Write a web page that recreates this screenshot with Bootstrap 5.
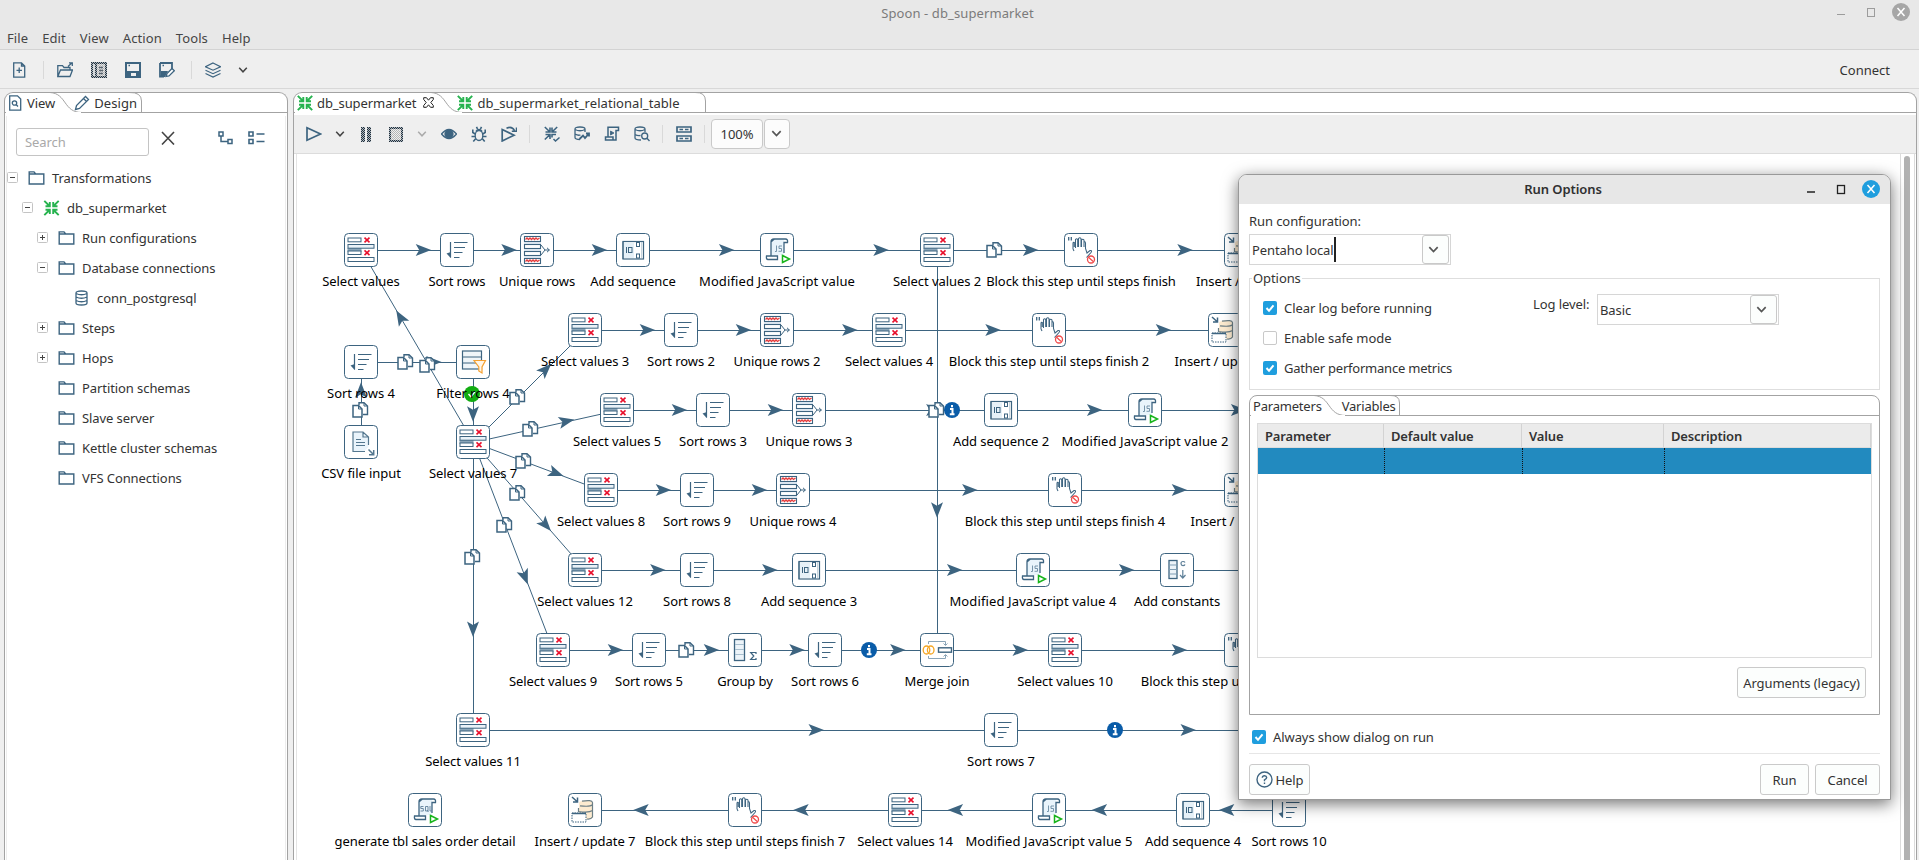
<!DOCTYPE html>
<html lang="en">
<head>
<meta charset="utf-8">
<title>Spoon - db_supermarket</title>
<link href="https://cdn.jsdelivr.net/npm/bootstrap@5.3.0/dist/css/bootstrap.min.css" rel="stylesheet">
<script src="https://cdn.jsdelivr.net/npm/bootstrap@5.3.0/dist/js/bootstrap.bundle.min.js"></script>
<style>
:root{--ink:#333;--blue:#3d6480;--line:#a3a3a3;--soft:#dcdcdc}
html,body{height:860px;overflow:hidden}
body{font-family:"Noto Sans",sans-serif;font-size:13px;line-height:18px;letter-spacing:-.08px;color:var(--ink);background:#efefef}
svg{display:block;flex:none}
.window-top{height:50px;background:#e8e8e8;border-bottom:1px solid #d3d3d3}
.caption-row{height:25px;color:#7b7b7b;letter-spacing:.1px;padding-right:4px}
.menu-row{height:26px;padding-left:7px;gap:14px;color:#454545;letter-spacing:.1px}
.maintools{height:39px;padding-top:2px;border-bottom:1px solid #d8d8d8}
.tool-ico{width:16px;height:16px;color:var(--blue);fill:none;stroke:currentColor;stroke-width:1.3}
.vsep{width:1px;height:18px;background:#d9d9d9;flex:none}
.work{height:771px;padding-top:3px}
.pane{border:1px solid var(--line);border-bottom:0;border-radius:9px 9px 0 0;background:#fff}
.pane-left{width:284px;margin-left:4px}
.pane-right{width:1624px;margin-left:5px}
.tabstrip{height:20px;border-bottom:1px solid var(--line);position:relative}
.tabstrip .curve{position:absolute;left:0;top:-1px}
.left-body{margin:3px 1px 0 1px;border:1px solid #ededed;border-top:0;border-bottom:0;height:745px}
.search-box{width:133px;height:28px;border:1px solid #c4c4c4;border-radius:3px;padding:0 8px;color:#a9a9a9;font-size:13px}
.tree-row{height:30px}
.tools2{height:39px;margin-top:2px;background:#efefef;border-bottom:1px solid #dcdcdc}
.boxed{border:1px solid #c9c9c9;border-radius:4px;background:#fcfcfc;height:30px}
.run-dialog{position:absolute;left:1238px;top:174px;width:653px;height:626px;background:#fff;border:1px solid #999;border-radius:9px 9px 0 0;box-shadow:0 4px 16px rgba(0,0,0,.55)}
.dlg-caption{height:29px;padding-bottom:2px;background:#e7e7e7;border-radius:8px 8px 0 0;font-weight:600;font-size:13px;color:#303030}
.combo{border:1px solid #d6d6d6;height:31px;padding:0 2px;background:#fff}
.combo-btn{width:27px;height:29px;border:1px solid #c9c9c9;border-radius:3px;background:#fcfefd;margin-right:-1px}
.caret{width:2px;height:25px;background:#222}
.opt-frame{border:1px solid #dedede;height:112px;position:relative;margin-top:13px}
.opt-frame .frame-title{position:absolute;top:-10px;left:2px;background:#fff;padding:0 1px}
.tick{width:14px;height:14px;border-radius:2px;background:#1f9ede;flex:none}
.tick.off{background:#fff;border:1px solid #c9c9c9}
.param-pane{height:320px;border:1px solid var(--line);border-radius:8px 8px 0 0;margin-top:5px}
.param-grid{margin:7px 7px 0 7px;height:235px;border:1px solid var(--soft)}
.param-head{height:24px;background:#ebebeb;border-bottom:1px solid var(--soft);font-weight:600;color:#333;letter-spacing:-.15px}
.param-head>div{border-right:1px solid #d3d3d3;padding:3px 0 0 7px}
.param-sel{height:26px;background:#228abf}
.param-sel>div+div{border-left:1px dotted #111}
.param-head>div:nth-child(1),.param-sel>div:nth-child(1){width:126px}
.param-head>div:nth-child(2),.param-sel>div:nth-child(2){width:138px}
.param-head>div:nth-child(3),.param-sel>div:nth-child(3){width:142px}
.push{border:1px solid #cacaca;border-radius:3px;background:#fcfefd;height:31px}
.graph text{font-family:"Noto Sans",sans-serif;font-size:13px;fill:#000;text-anchor:middle;letter-spacing:-.06px}
.graph .spaced{letter-spacing:.12px}
</style>
</head>
<body>
<!-- shared symbols -->
<svg width="0" height="0" class="position-absolute">
<defs>
<pattern id="dither" width="2" height="2" patternUnits="userSpaceOnUse"><rect width="1" height="1" fill="#25303a"/><rect x="1" y="1" width="1" height="1" fill="#25303a"/><rect x="1" width="1" height="1" fill="#a9b6c0"/><rect y="1" width="1" height="1" fill="#a9b6c0"/></pattern>
<pattern id="dither2" width="2" height="2" patternUnits="userSpaceOnUse"><rect width="1" height="1" fill="#b5b5b5"/><rect x="1" y="1" width="1" height="1" fill="#b5b5b5"/></pattern>
<symbol id="chev" viewBox="0 0 10 10"><path d="M1.200 2.800 5 6.800 8.800 2.800" fill="none" stroke="currentColor" stroke-width="1.500"/></symbol>
<symbol id="folder" viewBox="0 0 16 14"><path d="M.7 13V.9H5.500L7.200 3H15.300V13Z M.7 3H7" fill="none" stroke="#3d6480" stroke-width="1.400"/></symbol>
<symbol id="ktr" viewBox="0 0 16 16"><g fill="none" stroke="#27b34f" stroke-width="1.9"><path d="M.8.8 6 6M2 6.300H6.300V2"/><path d="M15.200.8 10 6M14 6.300H9.700V2"/><path d="M.8 15.200 6 10M2 9.700H6.300V14"/><path d="M15.200 15.200 10 10M14 9.700H9.700V14"/></g></symbol>
<symbol id="ok" viewBox="0 0 14 14"><path d="M3.500 7 6 9.800 10.500 4.300" fill="none" stroke="#fff" stroke-width="2"/></symbol>
<symbol id="winx" viewBox="0 0 18 18"><circle cx="9" cy="9" r="9" fill="currentColor"/><path d="M5.500 5 12.500 13M12.500 5 5.500 13" stroke="#fff" stroke-width="1.500"/></symbol>

<symbol id="st-frame" viewBox="0 0 34 34"><rect x=".5" y=".5" width="33" height="33" rx="4" fill="#fff" stroke="#3d6480"/></symbol>
<symbol id="st-select" viewBox="0 0 34 34"><g fill="#fff" stroke="#3d6480"><rect x="3.500" y="15" width="14" height="4" fill="#8aa5b8" stroke="none"/><rect x="4" y="5" width="13" height="3.800"/><rect x="4" y="11.500" width="26" height="3.700" fill="#eaf2f8"/><rect x="4" y="18" width="13" height="3.500"/><rect x="4" y="24.500" width="26" height="4"/></g><path d="M20.500 4.700 25.500 9.400M25.500 4.700 20.500 9.400M20.500 17.400 25.500 22.100M25.500 17.400 20.500 22.100" stroke="#e8112d" stroke-width="1.600"/></symbol>
<symbol id="st-sort" viewBox="0 0 34 34"><path d="M10.500 9V24.500M14 9.500H27.500M14 14.500H25M14 19.500H22.500M14 24.500H19.500" stroke="#3d6480" stroke-width="1.200"/><path d="M6.500 20.500 10.800 19V25Z" fill="#3d6480"/></symbol>
<symbol id="st-unique" viewBox="0 0 34 34"><rect x="4" y="3" width="17" height="28" fill="#e3edf5"/><g fill="#fff" stroke="#3d6480" stroke-width="1.100"><rect x="4.500" y="3.500" width="16" height="5"/><rect x="4.500" y="11.500" width="16" height="4"/><rect x="4.500" y="18.500" width="16" height="4"/><rect x="4.500" y="25.500" width="16" height="5"/></g><path d="M5.500 6.500 7 5 8.500 6.500 10 5 11.500 6.500 13 5 14.500 6.500 16 5 17.500 6.500 19.500 5M5.500 28.500 7 27 8.500 28.500 10 27 11.500 28.500 13 27 14.500 28.500 16 27 17.500 28.500 19.500 27" fill="none" stroke="#e63c3c" stroke-width="1.300"/><path d="M21 12 25 17H29.500M21 22 25 17M27 14.800 29.300 17 27 19.200" fill="none" stroke="#3d6480"/></symbol>
<symbol id="st-seq" viewBox="0 0 34 34"><rect x="7" y="8.500" width="20.500" height="17.500" fill="#fff" stroke="#3d6480" stroke-width="1.200"/><rect x="8" y="9.500" width="10" height="15.500" fill="#e6f1f8"/><path d="M10.500 14V20M7 8.500V26" stroke="#3d6480"/><rect x="12.500" y="14.500" width="3.500" height="5" fill="none" stroke="#3d6480"/><rect x="20.500" y="9.500" width="3" height="4" fill="#fff" stroke="#3d6480"/><rect x="20.500" y="21" width="3" height="4" fill="#fff" stroke="#3d6480"/><path d="M25.700 9V25" stroke="#b9cad6"/></symbol>
<symbol id="scroll" viewBox="0 0 34 34"><path d="M11 23V8Q11 6 13 6H24V22H11Z" fill="#e9f4fb"/><path d="M11 22.500V9Q11 6 14 6H25.500Q28 6 27.500 9.500H24V20M14.500 6Q12.500 7.500 11 9M6.500 23H17.500V26.500H8Q6 26.500 6.500 23Z" fill="none" stroke="#3d6480" stroke-width="1.300"/><path d="M22.500 22.500 29.500 26 22.500 29.500Z" fill="#fff" stroke="#17b41a" stroke-width="1.500"/></symbol>
<symbol id="st-js" viewBox="0 0 34 34"><use href="#scroll"/><path d="M16.500 12.500V18.500H15M22 13H19V15.500H21.500V18.300H18.500" fill="none" stroke="#6b8ba2" stroke-width=".9"/></symbol>
<symbol id="st-sql" viewBox="0 0 34 34"><use href="#scroll"/><path d="M15.500 13.500H12.800V15.500H15.300V18H12.500M17.500 13.500H20V18H17.500ZM19 17 20.500 19M22 13V18H24" fill="none" stroke="#5d7f98" stroke-width=".9"/></symbol>
<symbol id="st-block" viewBox="0 0 34 34"><path d="M4.700 4V7.500M7.300 4V7.500" stroke="#3d6480" stroke-width="1.300"/><path d="M9 16V10.500Q9 9 10.300 9.400V14M11.500 15V6.500Q12.700 5 13.700 6.500V14M14.500 14V5.500Q15.800 4 17 5.500V14M17.500 14V7Q18.800 5.500 20 7V14M20 8.500Q21.500 8.500 21.500 10V15.500L23 20 26 17.500Q28.500 17 27 19.500L22.500 24.500M9 16 10 18" fill="none" stroke="#3d6480" stroke-width="1.050"/><circle cx="27" cy="26.500" r="3.500" fill="#fff" stroke="#f04a4a" stroke-width="1.300"/><path d="M24.500 24.200 29.500 28.800" stroke="#f04a4a" stroke-width="1.200"/></symbol>
<symbol id="st-insert" viewBox="0 0 34 34"><path d="M11 10Q11 7.500 18 7.500T25 10V24Q24 26.500 17 26.500L11 20Z" fill="#fdebd0"/><path d="M14 8.200Q24 6.500 24.500 9.500V24Q23 26.500 19 26M10.500 15V19M12 12.800Q22 14 24.500 11.800M10.500 18.500Q21 20 24.500 17.500" fill="none" stroke="#6c7f86" stroke-width="1.200"/><path d="M4 4 9 8.500M9.500 4.500V9H5" fill="none" stroke="#3d6480" stroke-width="1.500"/><rect x="4" y="20" width="14" height="9" fill="#fff" stroke="#3d6480" stroke-dasharray="1.500 1"/><path d="M4 20.500H18" stroke="#3d6480" stroke-width="1.500"/></symbol>
<symbol id="st-group" viewBox="0 0 34 34"><rect x="6.500" y="6.500" width="10" height="21" fill="#edf4f9" stroke="#3d6480" stroke-width="1.300"/><path d="M7 11.500H16M7 16.500H16M7 21.500H16" stroke="#a9bfce"/><path d="M28 21V19.500H22.700L25.800 23 22.700 26.500H28V25" fill="none" stroke="#3d6480" stroke-width="1.200"/></symbol>
<symbol id="st-merge" viewBox="0 0 34 34"><g fill="none" stroke="#f5a623" stroke-width="1.300"><ellipse cx="6.500" cy="17" rx="3.300" ry="4"/><ellipse cx="10.700" cy="17" rx="3.300" ry="4"/></g><path d="M8.500 11V8.500H25.500V12M23.500 10.500 25.500 12.500 27.500 10.500M8.500 23V25.500H25.500V22M23.500 23.500 25.500 21.500 27.500 23.500" fill="none" stroke="#8aa5b8"/><rect x="18.500" y="14.800" width="13" height="4.400" fill="#fff" stroke="#3d6480" stroke-width="1.400"/></symbol>
<symbol id="st-const" viewBox="0 0 34 34"><rect x="9" y="7.500" width="8" height="18" fill="#edf4f9" stroke="#3d6480" stroke-width="1.300"/><path d="M9 12H17M9 16.500H17M9 21H17" stroke="#7f9db3"/><path d="M25 9.500Q24.500 8.500 23 8.500 21 8.500 21 10.500T23 12.700Q24.500 12.700 25 11.500M22.800 17V24.500M20 22 22.800 25 25.500 22" fill="none" stroke="#5d7f98" stroke-width="1.200"/></symbol>
<symbol id="st-filter" viewBox="0 0 34 34"><rect x="6.500" y="6" width="19" height="18" fill="#eff5f9" stroke="#3d6480" stroke-width="1.200"/><path d="M7 12H25M7 18H25" stroke="#3d6480"/><path d="M18 15.500H29.500L26 22V28L22.800 26V22Z" fill="#fff5e6" stroke="#f5a030" stroke-width="1.200"/></symbol>
<symbol id="st-csv" viewBox="0 0 34 34"><path d="M9 7H19L24.500 12V22L20 26.500H9Z" fill="#eaf4fb"/><path d="M24.500 20V12L19 7H9V26.500H21M19 7V12H24M12 14.500H17M12 17.500H21M12 20.500H21" fill="none" stroke="#54778f" stroke-width="1.200"/><path d="M24.500 24.500 29.500 29.500M29.700 25V29.700H25" fill="none" stroke="#54778f" stroke-width="1.500"/></symbol>
<symbol id="copies" viewBox="0 0 17 16"><path d="M7 3V.7H12L15.500 4V12.500H11" fill="#fff" stroke="#3d6480" stroke-width="1.400"/><path d="M1 3.500H6.500L10 7V15H1Z" fill="#fff" stroke="#3d6480" stroke-width="1.500"/><path d="M6.500 3.500V7H10M12 1V4H15" fill="none" stroke="#3d6480"/></symbol>
<symbol id="info" viewBox="0 0 16 16"><circle cx="8" cy="8" r="8" fill="#0a5ca8"/><path d="M8 3V5.200M6 7H8.500V12M5.800 12.200H10.500" fill="none" stroke="#fff" stroke-width="2"/></symbol>
<symbol id="check" viewBox="0 0 16 16"><circle cx="8" cy="8" r="8" fill="#12ad12"/><path d="M4.500 8 7 10.800 11 5.500" fill="none" stroke="#fff" stroke-width="1.400"/></symbol>
</defs></svg>

<header class="window-top">
  <div class="caption-row d-flex position-relative justify-content-center align-items-center">Spoon - db_supermarket
    <div class="position-absolute end-0 top-0 d-flex align-items-center" style="padding:3px 9px 0 0;color:#a6a6a6">
      <svg width="64" height="18"><path d="M0 11.500H8" stroke="#9c9c9c"/><rect x="30.500" y="5.500" width="7" height="8" fill="none" stroke="#9c9c9c"/></svg>
      <svg width="18" height="18" style="margin-left:-9px"><use href="#winx"/></svg>
    </div>
  </div>
  <nav class="menu-row d-flex align-items-center"><span>File</span><span>Edit</span><span>View</span><span>Action</span><span>Tools</span><span>Help</span></nav>
</header>

<div class="maintools d-flex align-items-center" style="padding-left:11px">
  <svg class="tool-ico" viewBox="0 0 16 16"><path d="M2.700.8H10.500L13.700 4V15.200H2.700ZM10.500.8V4H13.700M8.200 5.500V11M5.500 8.300H11"/></svg>
  <span class="vsep" style="margin:0 13px 0 16px"></span>
  <svg class="tool-ico" viewBox="0 0 16 16"><path d="M.8 14.500V3.700H5.500L7 5.500H13V8M.8 14.500 3.500 8H15.500L13 14.500ZM11 4.500 15 .8M12 .8H15.300V4"/></svg>
  <svg class="tool-ico" style="margin:0 18px" viewBox="0 0 16 16"><g stroke="none"><rect width="16" height="16" fill="url(#dither)"/><rect x="6" y="2" width="8" height="12" fill="#e4e6e8"/><rect x="6" y="2" width="8" height="12" fill="url(#dither2)"/><rect x="2" y="2" width="2" height="12" fill="#d5d9dc"/></g><path d="M8 5.500H12M8 8.500H12M8 11.500H12" stroke="#59656f"/></svg>
  <svg class="tool-ico" viewBox="0 0 16 16"><path d="M1 1H15V15H1Z" stroke-width="2"/><path d="M2 9H14V15H11V11H6V15H2Z" fill="#3d6480" stroke="none"/><path d="M3.500 3.500H5" /></svg>
  <svg class="tool-ico" style="margin-left:18px" viewBox="0 0 16 16"><path d="M1 1H13V7M1 1V14.500H5" stroke-width="1.800"/><path d="M3.500 3.500H5"/><path d="M2 9H9L6 15H2Z" fill="#3d6480" stroke="none"/><path d="M7 14.500 8 11.500 13 6.500 15.300 8.800 10 14Z" fill="#fff"/></svg>
  <span class="vsep" style="margin:0 13px 0 16px"></span>
  <svg class="tool-ico" viewBox="0 0 16 16"><path d="M8 1 15.500 4.700 8 8.200.5 4.700ZM.5 8.200 8 11.700 15.500 8.200M.5 11.500 8 15 15.500 11.500" stroke-width="1.200"/></svg>
  <svg width="10" height="10" style="margin-left:17px;color:#444"><use href="#chev"/></svg>
  <span class="ms-auto" style="margin-right:29px;letter-spacing:0">Connect</span>
</div>

<main class="work d-flex">
  <section class="pane pane-left">
    <div class="tabstrip d-flex align-items-center">
      <svg class="curve" width="280" height="21" fill="none" stroke="#a3a3a3"><path d="M45 .5C62 1.500 58 20.500 77 20.500M124 .5Q136.500 0 136.500 9V20"/><path d="M1 20.500H76" stroke="#fff"/></svg>
      <svg class="tool-ico" style="margin-left:2px" viewBox="0 0 16 16"><path d="M2.700.8H10.500L13.700 4V15.200H2.700Z"/><circle cx="7.500" cy="8" r="2.200"/><path d="M9.300 9.800 11 11.500"/></svg>
      <span style="margin-left:4px">View</span>
      <svg class="tool-ico" style="margin-left:19px" viewBox="0 0 16 16"><path d="M1.500 14.500 2.500 10.500 11.500 1.500 14.500 4.500 5.500 13.500ZM9.500 3.500 12.500 6.500"/></svg>
      <span style="margin-left:4px;letter-spacing:.1px">Design</span>
    </div>
    <div class="left-body">
      <div class="d-flex align-items-start" style="padding:12px 0 0 9px">
        <div class="search-box d-flex align-items-center">Search</div>
        <svg width="14" height="14" style="margin:3px 0 0 12px"><path d="M1 1 13 13.500M13 1 1 13.500" stroke="#444" stroke-width="1.600"/></svg>
        <svg width="15" height="14" style="margin:3px 0 0 43px" fill="none" stroke="#3d6480" stroke-width="1.500"><path d="M1 1H5V5H1ZM10 8.500H14V12.500H10ZM3 5V10.500H10"/></svg>
        <svg width="17" height="14" style="margin:3px 0 0 15px" fill="none" stroke="#3d6480" stroke-width="1.600"><path d="M1 1H5V5H1ZM1 8.500H5V12.500H1ZM8.500 3H16.500M8.500 10.500H16.500"/></svg>
      </div>
      <div id="tree" style="padding-top:7px"></div>
    </div>
  </section>

  <section class="pane pane-right">
    <div class="tabstrip d-flex align-items-center">
      <svg class="curve" width="500" height="21" fill="none" stroke="#a3a3a3"><path d="M137 .5C154 1.500 150 20.500 169 20.500M401 .5Q411.500 0 411.500 9V20"/><path d="M1 20.500H168" stroke="#fff"/></svg>
      <svg width="16" height="16" style="margin-left:3px"><use href="#ktr"/></svg>
      <span style="margin-left:4px">db_supermarket</span>
      <svg width="11" height="11" style="margin-left:7px" viewBox="0 0 11 11"><path d="M.7.7H3.500L5.500 3.200 7.500.7H10.300V2.500L7.800 5.500 10.300 8.500V10.300H7.500L5.500 7.800 3.500 10.300H.7V8.500L3.200 5.500.7 2.500Z" fill="#fff" stroke="#222"/></svg>
      <svg width="16" height="16" style="margin-left:23px"><use href="#ktr"/></svg>
      <span style="margin-left:4px;letter-spacing:.06px">db_supermarket_relational_table</span>
    </div>
    <div class="tools2 d-flex align-items-center" id="tools2">
      <svg class="tool-ico" style="margin-left:12px" viewBox="0 0 16 16"><path d="M1 1.800 14.500 8 1 14.200Z" stroke-width="1.700"/></svg>
      <svg width="10" height="10" style="margin-left:13px;color:#444"><use href="#chev"/></svg>
      <svg width="12" height="15" style="margin-left:16px"><rect width="4" height="15" fill="url(#dither)"/><rect x="6" width="4" height="15" fill="url(#dither)"/></svg>
      <svg width="15" height="15" style="margin-left:16px"><rect width="14" height="15" fill="url(#dither)"/><rect x="2" y="2" width="10" height="11" fill="#efefef"/><rect x="2" y="2" width="10" height="11" fill="url(#dither2)"/></svg>
      <svg width="10" height="10" style="margin-left:13px;color:#aaa"><use href="#chev"/></svg>
      <svg class="tool-ico" style="margin-left:14px" viewBox="0 0 16 16"><path d="M.5 8Q8-1 15.500 8 8 17 .5 8Z"/><circle cx="8" cy="8" r="4" fill="#3d6480"/></svg>
      <svg class="tool-ico" style="margin-left:14px" viewBox="0 0 16 16"><ellipse cx="8" cy="9.500" rx="3.800" ry="5"/><path d="M5 5.500Q8 1.500 11 5.500M5.500.8 6.500 3M10.500.8 9.500 3M4.300 8 1.800 6.500V3.500M11.700 8 14.200 6.500V3.500M4 10.500H.5M12 10.500H15.500M4.800 12.500 2.300 15.500M11.200 12.500 13.700 15.500" stroke-width="1.600"/></svg>
      <svg class="tool-ico" style="margin-left:14px" viewBox="0 0 16 16"><path d="M1.200 3.500 13 9.200 1.200 15Z" stroke-width="1.700"/><path d="M5.500 2.200Q11-.2 13.500 4.500M15.500 1.500V5.200H10.800" stroke-width="1.500"/></svg>
      <span class="vsep" style="margin:0 14px 0 12px"></span>
      <svg class="tool-ico" viewBox="0 0 16 16"><path d="M.8 1 5.500 5.500M1.500 6H6V1.500M13.200 1 8.500 5.500M12.500 6H8V1.500M.8 13.500 5.500 9M1.500 8.500H6V13M8 11.500V8.500H12" stroke-width="1.600"/><path d="M9.500 13 11.500 15 15.500 11.500" stroke-width="1.500"/></svg>
      <svg class="tool-ico" style="margin-left:14px" viewBox="0 0 16 16"><path d="M6 13.500Q1 13.500 1 11.500V3Q1 1 6 1T11 3V6M1 3.500Q6 6 11 3.500M1 8Q4 9.800 6.500 9"/><path d="M5.500 13 9 9.500 11 12 15 7.500M12 7.500H15V10.500" stroke-width="1.800"/></svg>
      <svg class="tool-ico" style="margin-left:14px" viewBox="0 0 16 16"><path d="M4 11V1.300H14.500V4.500H12V14H1.500V11H9V14" stroke-width="1.500"/><path d="M6.500 5 10 7 6.500 9Z" fill="#3d6480" stroke-width=".8"/></svg>
      <svg class="tool-ico" style="margin-left:14px" viewBox="0 0 16 16"><path d="M7 14Q1 14 1 12V3Q1 1 6 1T11 3V6M1 3.500Q6 6 11 3.500M1 8.500Q3.500 10 6.500 9.500"/><circle cx="10.700" cy="10" r="3"/><path d="M13 12.300 15.500 15"/></svg>
      <span class="vsep" style="margin:0 13px 0 12px"></span>
      <svg class="tool-ico" viewBox="0 0 16 16"><path d="M1 1H15V6H1ZM1 10H15V15H1Z" stroke-width="1.700"/><path d="M3.500 3.500H7M9 3.500H12.500M3.500 12.500H7M9 12.500H12.500"/></svg>
      <span class="vsep" style="margin:0 6px 0 12px"></span>
      <div class="boxed d-flex align-items-center justify-content-center" style="width:52px">100%</div>
      <div class="boxed d-flex justify-content-center" style="width:26px;margin-left:1px;padding:8px 2px 0 0"><svg width="11" height="11" style="color:#555"><use href="#chev"/></svg></div>
    </div>
    <div class="d-flex" style="margin-left:2px;border-left:1px solid #e4e4e4;height:706px">
      <svg class="graph" id="graph" width="1603" height="706" viewBox="297 154 1603 706"></svg>
      <div style="width:15px;border-left:1px solid #dcdcdc;border-right:1px solid #dcdcdc;padding:2px 0 0 3px"><div class="rounded-top-3 h-100" style="width:6px;background:#b2b2b2"></div></div>
    </div>
  </section>
</main>

<section class="run-dialog">
  <div class="dlg-caption d-flex align-items-center justify-content-center position-relative"><span style="margin-right:3px">Run Options</span>
    <div class="position-absolute end-0 top-0 d-flex" style="padding:5px 10px 0 0;color:#1f9ede">
      <svg width="55" height="18"><path d="M0 12H8" stroke="#222" stroke-width="1.500"/><rect x="30.500" y="5.500" width="7" height="8" fill="none" stroke="#222" stroke-width="1.300"/></svg>
      <svg width="18" height="18"><use href="#winx"/></svg>
    </div>
  </div>
  <div style="padding:8px 10px 0 10px">
    <div>Run configuration:</div>
    <div class="combo d-flex align-items-center" style="width:202px;margin-top:4px">Pentaho local<span class="caret"></span><span class="combo-btn ms-auto d-flex align-items-center justify-content-center pe-1"><svg width="11" height="11" style="color:#555"><use href="#chev"/></svg></span></div>
    <div class="opt-frame"><span class="frame-title">Options</span>
      <div class="d-flex" style="padding:14px 0 0 13px">
        <div class="d-flex flex-column" style="gap:12px;width:270px;padding-top:6px">
          <div class="d-flex align-items-center" style="gap:7px"><span class="tick"><svg width="14" height="14"><use href="#ok"/></svg></span>Clear log before running</div>
          <div class="d-flex align-items-center" style="gap:7px"><span class="tick off"></span>Enable safe mode</div>
          <div class="d-flex align-items-center" style="gap:7px;letter-spacing:-.22px"><span class="tick"><svg width="14" height="14"><use href="#ok"/></svg></span>Gather performance metrics</div>
        </div>
        <div style="width:64px;padding-top:2px">Log level:</div>
        <div class="combo d-flex align-items-center" style="width:182px;margin-top:1px">Basic<span class="combo-btn ms-auto d-flex align-items-center justify-content-center pe-1"><svg width="11" height="11" style="color:#555"><use href="#chev"/></svg></span></div>
      </div>
    </div>
    <div class="param-pane">
      <div class="tabstrip d-flex align-items-center"><svg class="curve" width="200" height="21" fill="none" stroke="#a3a3a3"><path d="M64 .5C81 1.500 77 20.500 96 20.500M140 .5Q149.500 0 149.500 8V20"/><path d="M1 20.500H95" stroke="#fff"/></svg>
        <span style="margin-left:3px;letter-spacing:-.2px">Parameters</span><span style="margin-left:20px;letter-spacing:-.2px">Variables</span></div>
      <div class="param-grid">
        <div class="param-head d-flex"><div>Parameter</div><div>Default value</div><div>Value</div><div class="flex-fill">Description</div></div>
        <div class="param-sel d-flex"><div></div><div></div><div></div><div></div></div>
      </div>
      <div class="d-flex justify-content-end" style="padding:9px 13px 0 0"><div class="push d-flex align-items-center justify-content-center" style="width:129px">Arguments (legacy)</div></div>
    </div>
    <div class="d-flex align-items-center" style="gap:7px;padding:13px 0 0 3px"><span class="tick"><svg width="14" height="14"><use href="#ok"/></svg></span>Always show dialog on run</div>
    <div class="d-flex" style="border-top:1px solid #e6e6e6;margin-top:7px;padding-top:10px;gap:6px">
      <div class="push d-flex align-items-center justify-content-center" style="width:61px;gap:3px"><svg width="17" height="17" fill="none" stroke="#3d6480" stroke-width="1.400"><circle cx="8.500" cy="8.500" r="7.500"/><path d="M6.300 6.800Q6.500 4.700 8.500 4.700T10.700 6.600Q10.700 7.800 8.500 8.800V10.300M8.500 11.500V13"/></svg>Help</div>
      <div class="push d-flex align-items-center justify-content-center ms-auto" style="width:49px">Run</div>
      <div class="push d-flex align-items-center justify-content-center" style="width:65px">Cancel</div>
    </div>
  </div>
</section>

<script>
// Explorer tree: [level, expander, icon, label]
const tree=[[0,'-','folder','Transformations'],[1,'-','ktr','db_supermarket'],[2,'+','folder','Run configurations'],[2,'-','folder','Database connections'],[3,'','db','conn_postgresql'],[2,'+','folder','Steps'],[2,'+','folder','Hops'],[2,'','folder','Partition schemas'],[2,'','folder','Slave server'],[2,'','folder','Kettle cluster schemas'],[2,'','folder','VFS Connections']];
const icons={folder:'<svg width="17" height="14"><use href="#folder"/></svg>',ktr:'<svg width="17" height="16"><use href="#ktr"/></svg>',
db:'<svg width="17" height="16" fill="none" stroke="#3d6480" stroke-width="1.300"><path d="M3 3Q3 1 8.500 1T14 3V13Q14 15 8.500 15T3 13ZM3 3.500Q8.500 6 14 3.500M3 7Q8.500 9.500 14 7M3 10.500Q8.500 13 14 10.500"/></svg>'};
document.getElementById('tree').innerHTML=tree.map(([l,e,i,t])=>`<div class="tree-row d-flex align-items-center" style="padding-left:${l*15}px">${
 e?`<svg width="12" height="12" style="margin:0 9px 0 0"><rect x=".5" y=".5" width="10" height="10" rx="1" fill="#fff" stroke="#c4c4c4"/><path d="M3 5.500H8${e=='+'?'M5.500 3V8':''}" stroke="#444"/></svg>`:'<span style="width:21px"></span>'}${icons[i]}<span style="margin-left:7px">${t}</span></div>`).join('');

// Steps: id -> [x, y, kind, label]
const S={a1:[361,250,'select','Select values'],a2:[457,250,'sort','Sort rows'],a3:[537,250,'unique','Unique rows'],a4:[633,250,'seq','Add sequence'],a5:[777,250,'js','Modified JavaScript value'],a6:[937,250,'select','Select values 2'],a7:[1081,250,'block','Block this step until steps finish'],a8:[1241,250,'insert','Insert / update'],
b1:[585,330,'select','Select values 3'],b2:[681,330,'sort','Sort rows 2'],b3:[777,330,'unique','Unique rows 2'],b4:[889,330,'select','Select values 4'],b5:[1049,330,'block','Block this step until steps finish 2'],b6:[1225,330,'insert','Insert / update 2'],
c0:[361,362,'sort','Sort rows 4'],c1:[473,362,'filter','Filter rows 4'],d0:[361,442,'csv','CSV file input'],d1:[473,442,'select','Select values 7'],
e1:[617,410,'select','Select values 5'],e2:[713,410,'sort','Sort rows 3'],e3:[809,410,'unique','Unique rows 3'],e4:[1001,410,'seq','Add sequence 2'],e5:[1145,410,'js','Modified JavaScript value 2'],e6:[1289,410],
f1:[601,490,'select','Select values 8'],f2:[697,490,'sort','Sort rows 9'],f3:[793,490,'unique','Unique rows 4'],f4:[1065,490,'block','Block this step until steps finish 4'],f5:[1241,490,'insert','Insert / update 4'],
g1:[585,570,'select','Select values 12'],g2:[697,570,'sort','Sort rows 8'],g3:[809,570,'seq','Add sequence 3'],g4:[1033,570,'js','Modified JavaScript value 4'],g5:[1177,570,'const','Add constants'],g6:[1305,570],
h1:[553,650,'select','Select values 9'],h2:[649,650,'sort','Sort rows 5'],h3:[745,650,'group','Group by'],h4:[825,650,'sort','Sort rows 6'],h5:[937,650,'merge','Merge join'],h6:[1065,650,'select','Select values 10'],h7:[1241,650,'block','Block this step until steps finish 6'],
i1:[473,730,'select','Select values 11'],i2:[1001,730,'sort','Sort rows 7'],i3:[1289,730],
j0:[425,810,'sql','generate tbl sales order detail'],j1:[585,810,'insert','Insert / update 7'],j2:[745,810,'block','Block this step until steps finish 7'],j3:[905,810,'select','Select values 14'],j4:[1049,810,'js','Modified JavaScript value 5'],j5:[1193,810,'seq','Add sequence 4'],j6:[1289,810,'sort','Sort rows 10']};
// Hops: from, to, markers
const H=['a1 a2','a2 a3','a3 a4','a4 a5','a5 a6','a6 a7 copies','a7 a8','b1 b2','b2 b3','b3 b4','b4 b5','b5 b6','d0 c0 copies','c0 c1 copies','c1 d1 check','d1 a1 copies','d1 b1 copies','d1 e1 copies','d1 f1 copies','d1 g1 copies','d1 h1 copies','d1 i1 copies','e1 e2','e2 e3','e3 e4','e4 e5','e5 e6','f1 f2','f2 f3','f3 f4','f4 f5','g1 g2','g2 g3','g3 g4','g4 g5','g5 g6','h1 h2','h2 h3 copies','h3 h4','h4 h5 info','a6 h5 copies info','h5 h6','h6 h7','i1 i2','i2 i3 info','j6 j5','j5 j4','j4 j3','j3 j2','j2 j1'];
let lines='',marks='',steps='';
for(const h of H){const [a,b,...m]=h.split(' '),[x1,y1]=S[a],[x2,y2]=S[b],dx=x2-x1,dy=y2-y1,d=Math.hypot(dx,dy);
 lines+=`<line x1="${x1+.5}" y1="${y1+.5}" x2="${x2+.5}" y2="${y2+.5}" stroke="#3d6480"/>`;
 const k=(.65*d+7.8)/d,ang=Math.atan2(dy,dx)*180/Math.PI;
 lines+=`<path d="M0 0L-15.500 -6L-12 0L-15.500 6Z" fill="#3d6480" transform="translate(${x1+dx*k} ${y1+dy*k}) rotate(${ang})"/>`;
 m.forEach((n,i)=>{const cx=Math.round(x1+dx*.4+i*16)-1,cy=Math.round(y1+dy*.4);marks+=`<use href="#${n}" x="${cx-8}" y="${cy-8}" width="${n=='copies'?17:16}" height="16"/>`});}
for(const k in S){const [x,y,t,l]=S[k];if(!t)continue;
 steps+=`<use href="#st-frame" x="${x-17}" y="${y-17}" width="34" height="34"/><use href="#st-${t}" x="${x-17}" y="${y-17}" width="34" height="34"/><text x="${x}" y="${y+36}"${l.startsWith('Modified')?' class="spaced"':''}>${l}</text>`;}
document.getElementById('graph').innerHTML=lines+marks+steps;
</script>
</body>
</html>
